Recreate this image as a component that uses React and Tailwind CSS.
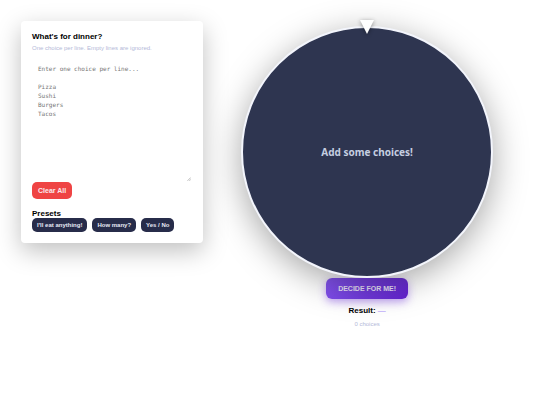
import React, { useState } from 'react';

const PRESETS = [
  { label: "I'll eat anything!", items: ['Pizza', 'Sushi', 'Burgers', 'Tacos', 'Pasta', 'Salad'] },
  { label: 'How many?', items: ['1', '2', '3', '4', '5'] },
  { label: 'Yes / No', items: ['Yes', 'No'] },
];

const PLACEHOLDER = 'Enter one choice per line...\n\nPizza\nSushi\nBurgers\nTacos';

const App = () => {
  const [text, setText] = useState('');
  const [result, setResult] = useState('');

  const choices = text.split('\n').map((line) => line.trim()).filter(Boolean);

  const decide = () => {
    if (choices.length === 0) return;
    setResult(choices[Math.floor(Math.random() * choices.length)]);
  };

  const clearAll = () => {
    setText('');
    setResult('');
  };

  return (
    <div className="min-h-screen bg-white p-[21px] font-['Liberation_Sans',sans-serif] text-black">
      <main className="grid grid-cols-[3fr_5fr] items-start gap-3">
        {/* Choices panel */}
        <section className="rounded-[4px] bg-white p-[11px] shadow-[0_8px_25px_rgba(0,0,0,0.25)]">
          <h1 className="text-[8px] leading-[9px] font-bold">
            <label htmlFor="choices">What's for dinner?</label>
          </h1>
          <p className="mt-[3px] mb-[6px] text-[6px] leading-[8px] text-[#b4b9d8]">
            One choice per line. Empty lines are ignored.
          </p>

          <div className="relative">
            <textarea
              id="choices"
              value={text}
              onChange={(e) => setText(e.target.value)}
              placeholder={PLACEHOLDER}
              className="block h-[124px] w-full resize-none p-[6px] font-['DejaVu_Sans_Mono',monospace] text-[6px] leading-[9px] outline-none placeholder:text-[#757575]"
            />
            <svg viewBox="0 0 4 4" className="pointer-events-none absolute right-px bottom-px h-1 w-1" aria-hidden="true">
              <path d="M0.5 3.8 L3.8 0.5 M2.4 3.8 L3.8 2.4" stroke="#777" strokeWidth="0.5" />
            </svg>
          </div>

          <button
            type="button"
            onClick={clearAll}
            className="block h-[17px] rounded-[5px] bg-[#ef4444] px-[6px] text-[7px] leading-[9px] font-bold text-[#fbe9ee]"
          >
            Clear All
          </button>

          <h2 className="mt-[10px] text-[8px] leading-[9px] font-bold">Presets</h2>
          <div className="flex flex-wrap gap-[5px]">
            {PRESETS.map((preset) => (
              <button
                key={preset.label}
                type="button"
                onClick={() => setText(preset.items.join('\n'))}
                className="h-[14px] rounded-[5px] bg-[#272c4a] px-[5px] text-[6px] leading-[8px] font-bold whitespace-nowrap text-[#e6e9f5]"
              >
                {preset.label}
              </button>
            ))}
          </div>
        </section>

        {/* Wheel */}
        <section className="flex flex-col items-center pt-[5px]">
          <div className="relative z-10 flex aspect-square w-full max-w-[252px] items-center justify-center rounded-full border-2 border-[#f3f5fc] bg-[#2e3550] shadow-[0_8px_34px_rgba(0,0,0,0.35)]">
            <svg
              viewBox="0 0 14 14"
              className="absolute -top-2 left-1/2 h-3.5 w-3.5 -translate-x-1/2 overflow-visible drop-shadow-[0_1px_2px_rgba(0,0,0,0.4)]"
              aria-hidden="true"
            >
              <path d="M0 0 H14 L7 14 Z" fill="#fff" />
            </svg>
            <span className="font-['Noto_Sans',sans-serif] text-[10px] leading-[14px] font-bold text-[#c5cee0]">
              {choices.length === 0 ? 'Add some choices!' : result || 'Ready!'}
            </span>
          </div>

          <button
            type="button"
            onClick={decide}
            className="h-[21px] rounded-[6px] bg-linear-135 from-[#8655f2] to-[#6420d0] px-3 text-[7px] leading-[9px] font-bold text-[#ede6fc] shadow-[0_3px_8px_rgba(124,58,237,0.45)]"
          >
            DECIDE FOR ME!
          </button>

          <p className="mt-[7px] text-[8px] leading-[10px] font-bold">
            Result: <span className="font-normal text-[#a78bfa]">{result || '—'}</span>
          </p>
          <p className="mt-1 text-[6px] leading-[8px] text-[#b4b9d8]">{choices.length} choices</p>
        </section>
      </main>
    </div>
  );
};

export default App;
